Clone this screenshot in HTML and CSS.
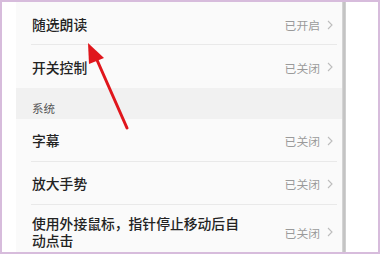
FILE: index.html
```html
<!DOCTYPE html>
<html lang="zh">

<head>
  <title>辅助功能</title>
  <link rel="stylesheet" href="styles.css">
</head>

<body>
  <div class="screen">
    <div class="gutter"></div>

    <div class="list">
      <div class="row row-first">
        <span class="row-title">随选朗读</span>
        <span class="row-state">已开启</span>
        <svg class="chevron" viewBox="0 0 6 10"><path d="M1 1 L5 5 L1 9" /></svg>
      </div>
      <div class="row row-last">
        <span class="row-title">开关控制</span>
        <span class="row-state">已关闭</span>
        <svg class="chevron" viewBox="0 0 6 10"><path d="M1 1 L5 5 L1 9" /></svg>
      </div>

      <div class="section">系统</div>

      <div class="row">
        <span class="row-title">字幕</span>
        <span class="row-state">已关闭</span>
        <svg class="chevron" viewBox="0 0 6 10"><path d="M1 1 L5 5 L1 9" /></svg>
      </div>
      <div class="row">
        <span class="row-title">放大手势</span>
        <span class="row-state">已关闭</span>
        <svg class="chevron" viewBox="0 0 6 10"><path d="M1 1 L5 5 L1 9" /></svg>
      </div>
      <div class="row row-tall">
        <span class="row-title row-title-wrap">使用外接鼠标，指针停止移动后自动点击</span>
        <span class="row-state">已关闭</span>
        <svg class="chevron" viewBox="0 0 6 10"><path d="M1 1 L5 5 L1 9" /></svg>
      </div>
    </div>

    <div class="scroll-edge"></div>
    <div class="side"></div>

    <!-- red annotation arrow drawn over the list -->
    <svg class="arrow" viewBox="0 0 376 250" width="376" height="250">
      <line x1="125" y1="126" x2="95" y2="58" />
      <polygon points="86,41 87,62 102,56" />
    </svg>
  </div>
</body>

</html>
```

FILE: styles.css
```css
body {
  margin: 0;
  background-color: #ffffff;
  font-family: "Noto Sans CJK SC", "Noto Sans", sans-serif;
}

.screen {
  position: relative;
  width: 380px;
  height: 254px;
  box-sizing: border-box;
  border: 2px solid #d7bcdc;
  display: flex;
  overflow: hidden;
  background-color: #ffffff;
}

.gutter {
  width: 14px;
  flex-shrink: 0;
  background-color: #ffffff;
}

.list {
  width: 326px;
  flex-shrink: 0;
  display: flex;
  flex-direction: column;
  background-color: #fafafa;
}

.row {
  display: flex;
  align-items: center;
  height: 43px;
  box-sizing: border-box;
  margin: 0 5px 0 15px;
  padding: 1px 4px 0 1px;
  border-bottom: 1px solid #e9e9e9;
}

.row-first {
  padding-top: 3px;
}

.row-last {
  border-bottom: none;
  padding-top: 1px;
}

.row-tall {
  height: 46px;
  border-bottom: none;
  padding-top: 8px;
}

.row-title {
  flex: 1;
  font-size: 13.8px;
  font-weight: 500;
  color: #232323;
  line-height: 17px;
}

.row-title-wrap {
  flex: none;
  width: 214px;
  margin-right: auto;
}

.row-state {
  font-size: 11.8px;
  color: #9a9a9a;
  margin-right: 7px;
}

.chevron {
  width: 6px;
  height: 10px;
  fill: none;
  stroke: #bdbdbd;
  stroke-width: 1.1;
}

.section {
  height: 31px;
  box-sizing: border-box;
  margin-right: -8px;
  padding: 12px 0 0 16px;
  font-size: 11.5px;
  color: #555555;
  background-color: #f1f1f1;
}

.scroll-edge {
  width: 4px;
  flex-shrink: 0;
  position: relative;
  z-index: 1;
  background: linear-gradient(to right, #dcdcdc, #bdbdbd 50%, #d6d6d6);
}

.side {
  flex: 1;
  background-color: #ffffff;
}

.arrow {
  position: absolute;
  top: 0;
  left: 0;
  z-index: 2;
}

.arrow line {
  stroke: #e0161c;
  stroke-width: 3;
  stroke-linecap: round;
}

.arrow polygon {
  fill: #e0161c;
}
```
